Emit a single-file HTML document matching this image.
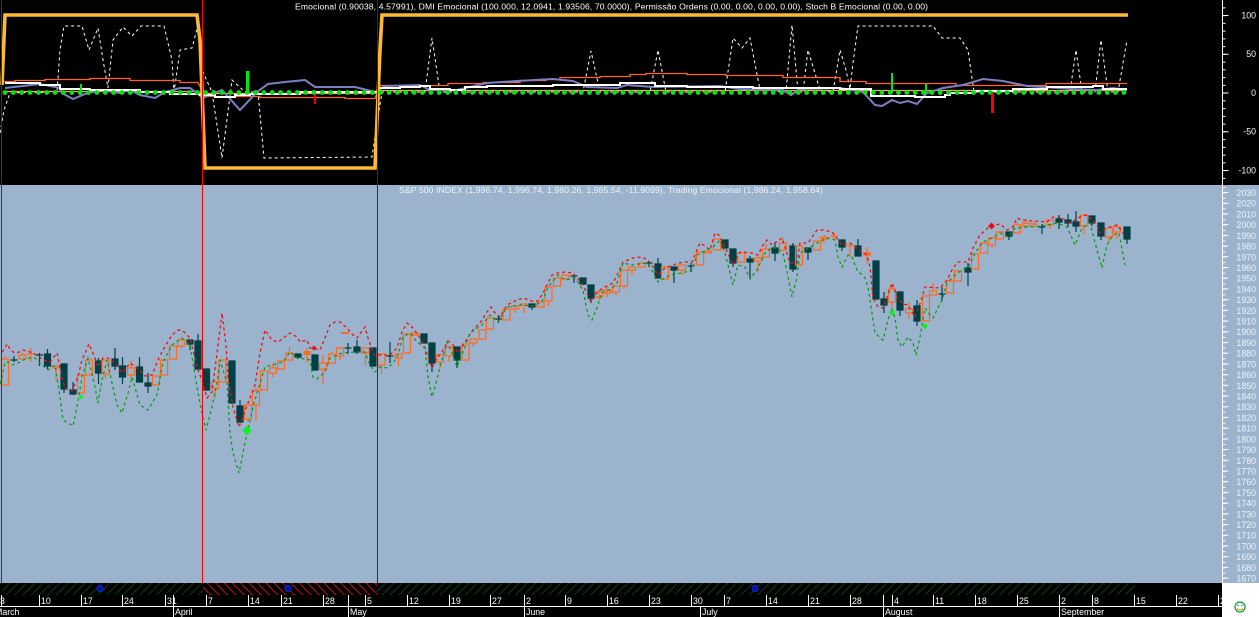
<!DOCTYPE html>
<html><head><meta charset="utf-8"><style>
html,body{margin:0;padding:0;background:#fff;overflow:hidden}
svg{display:block;font-family:"Liberation Sans",sans-serif}
</style></head><body>
<svg width="1259" height="617" viewBox="0 0 1259 617" xmlns="http://www.w3.org/2000/svg">
<defs>
<pattern id="hg" patternUnits="userSpaceOnUse" width="8.35" height="8.35"><path d="M0 8.35L8.35 0" stroke="#0a5f12" stroke-width=".7"/></pattern>
<pattern id="hr" patternUnits="userSpaceOnUse" width="8.35" height="8.35"><path d="M0 0L8.35 8.35" stroke="#ee1010" stroke-width=".9"/></pattern>
</defs>
<rect width="1259" height="617" fill="#fff"/>
<rect width="1259" height="185" fill="#000"/>
<rect y="185" width="1222" height="398" fill="#9bb3cc"/>
<rect x="1223" y="185" width="36" height="398" fill="#9bb3cc"/>
<rect y="583" width="1222" height="34" fill="#000"/>

<!-- upper panel -->
<g fill="none">
<path d="M0 133L4 110 10 93 57 92 60 50 64 26 82 26 89 50 98 28 103 60 108 88 113 40 123 27 132 36 141 26 164 26 172 60 174 92 180 50 192 48 198 25 202 70 212 92 222 158 232 80 245 92 258 92 264 158 372 157 376 130 382 92 425 92 432 38 440 92 583 92 591 51 600 92 650 92 658 50 666 92 725 92 733 38 742 48 750 38 760 90 786 92 792 25 798 92 803 92 808 50 820 90 833 92 840 50 843 60 846 70 850 89 853 63 858 26 933 26 942 38 960 38 968 50 974 92 1070 92 1076 50 1082 92 1095 92 1101 40 1108 92 1118 92 1127 40" stroke="#fff" stroke-width="1" stroke-dasharray="3 3"/>
<path transform="translate(0 .5)" d="M4 81H15V80H45V79H90V78H130V80H180V82H198L205 96H260V97H345V98H375L380 85H448V83H483V82H520V80H546V79H560V77H600V76H630V74H646V73H687V74H726V75H783V77H840V81H866V83H956V85H1046V83H1066V83H1127" stroke="#ff6428" stroke-width="1.3"/>
<path transform="translate(0 .5)" d="M3 91H198L206 93H375L380 90H1127" stroke="#ffa85a" stroke-width="1.2"/>
<path d="M5 88L40 84 60 88 62 93 73 99 85 94 100 90 120 93 130 90 140 95 155 98 165 92 180 88 190 88 203 98 222 90 240 110 257 92 268 84 285 82 305 80 315 87 355 87 375 92 385 86 420 85 430 90 457 90 487 83 517 81 553 79 573 81 587 87 617 88 627 85 653 87 720 86 740 89 783 90 791 95 800 89 840 88 863 92 875 105 882 106 892 100 900 103 908 101 917 104 927 93 943 88 963 85 983 79 1003 81 1027 86 1073 89 1097 90 1113 88 1127 90" stroke="#7d80c2" stroke-width="2"/>
<path d="M5 83H40V85H60V89H90V90H140V92H170V94H200V95H215V97H235V95H250V94H300V92H378V88H400V87H420V86H430V89H450V90H465V87H487V86H553V85H620V83H655V86H687V87H753V88H840V89H871V96H915V97H945V95H950V93H973V91H1013V89H1047V87H1093V86H1103V89H1127" stroke="#fff" stroke-width="2"/>
<path d="M2 85L5 15H197L200 40 202 90 205 168H375L377 120 380 50 382 15H1128" stroke="#fdb933" stroke-width="3.6"/>
<line x1="5" y1="92.500" x2="1127" y2="92.500" stroke="#0be017" stroke-width="4.800" stroke-linecap="round" stroke-dasharray="0 8.35"/>
</g>
<g fill="#0be017">
<rect x="80" y="84" width="2" height="9"/><rect x="246" y="71" width="3.5" height="22"/>
<rect x="891" y="73" width="2" height="20"/><rect x="925" y="84" width="2" height="9"/>
</g>
<g fill="#f00"><rect x="314" y="95" width="2" height="9"/><rect x="991" y="93" width="3" height="20"/></g>

<!-- titles -->
<text x="295" y="9.500" font-size="8.6" fill="#fff" textLength="633" lengthAdjust="spacing">Emocional (0.90038, 4.57991), DMI Emocional (100.000, 12.0941, 1.93506, 70.0000), Permissão Ordens (0.00, 0.00, 0.00, 0.00), Stoch B Emocional (0.00, 0.00)</text>
<text x="399" y="193" font-size="8.6" fill="#eef3f8" textLength="424" lengthAdjust="spacing">S&amp;P 500 INDEX (1,996.74, 1,996.74, 1,980.26, 1,985.54, -11.9099), Trading Emocional (1,986.24, 1,958.64)</text>

<!-- dark candles -->
<path fill="#003f45" stroke="#003f45" stroke-width="1.2" d="M10.5 360h7M14 356V362M36 355h7M39.5 353V366M44.5 354h6v12h-6zM47.5 349V369M61 364h6v25h-6zM64 364V393M70 390h6v4h-6zM73 382V395M95.5 361h6v12h-6zM98.5 358V384M112 359h6v7h-6zM115 348V370M119.5 366h6v11h-6zM122.5 357V384M136.5 367h6v15h-6zM139.5 357V382M145 383h6v3h-6zM148 373V393M187 340h6v4h-6zM190 340V350M195 341h6v28h-6zM198 334V369M203.5 369h6v21h-6zM229 361h6v42h-6zM237 406h6v16h-6zM240 400V422M295 354h6v3h-6zM298 354V359M312 355h6v15h-6zM344.5 348h7M348 343V354M354 347h6v5h-6zM357 340V354M370 348h6v18h-6zM386.5 356h7M390 342V363M421 334h6v9h-6zM429 343h6v20h-6zM432 343V372M454 347h6v13h-6zM457 347V368M495 319h7M498.5 315V323M529 304h6v3h-6zM532 304V310M570.5 276h7M574 275V283M580 278h6v6h-6zM588 285h6v13h-6zM591 285V303M645.5 263h7M649 261V267M655 264h6v14h-6zM658 258V278M671 267h6v3h-6zM674 267V283M687.5 266h7M691 263V272M722 240h6v8h-6zM730 249h6v14h-6zM733 249V267M747 259h6v3h-6zM750 256V279M772 248h6v5h-6zM775 242V261M790 246h6v23h-6zM793 243V272M805 248h6v4h-6zM808 248V260M839 240h6v7h-6zM842 240V251M855 246h6v10h-6zM858 239V256M873 261h6v38h-6zM881 299h6v6h-6zM884 292V313M897 292h6v18h-6zM900 292V316M914 306h6v15h-6zM917 300V326M938.5 294h7M942 287V301M965 268h6v4h-6zM968 263V286M1006 232h6v4h-6zM1009 232V240M1038.5 227h7M1042 224V234M1056 219h6v3h-6zM1059 215V229M1065 220h6v3h-6zM1068 214V227M1073 222h6v4h-6zM1076 211V232M1089 216h6v7h-6zM1092 216V226M1098 223h6v13h-6zM1101 223V240M1124 227h6v12h-6zM1127 227V244"/>

<!-- orange candles -->
<path fill="none" stroke="#ff6a1e" stroke-width="1.25" d="M1.500 359h7v26h-7zM5 356V359M19 355h7v4h-7zM22.500 353V355M27 354h8M31 348V362M52.500 366h7v2h-7zM56 368V380M77.500 375h7v18h-7zM85.500 360h7v15h-7zM89 359V360M102 360h7v14h-7zM105.500 374V379M127.500 368h7v7h-7zM131 361V368M131 375V379M152.500 376h7v9h-7zM160.500 360h7v15h-7zM164 359V360M169.500 346h7v13h-7zM177.500 340h7v6h-7zM181 338V340M181 346V348M211.500 382h7v7h-7zM215 380V382M215 389V398M219 360h7v22h-7zM244.500 405h7v14h-7zM248 419V422M252.500 391h7v14h-7zM256 388V391M256 405V421M260.500 371h7v19h-7zM269.500 368h7v5h-7zM273 363V368M273 373V377M277.500 361h7v8h-7zM286 353h7v7h-7zM289.500 347V353M319.500 363h7v6h-7zM323 355V363M323 369V384M328.500 354h7v9h-7zM332 352V354M336.500 348h7v8h-7zM340 347V348M340 356V360M362 348h7v5h-7zM365.500 353V366M378 354h7v11h-7zM381.500 365V374M395 354h7v4h-7zM398.500 358V366M403.500 334h7v19h-7zM411.500 333h7v2h-7zM436.500 355h7v7h-7zM440 362V368M445.500 347h7v9h-7zM449 356V362M462 344h7v16h-7zM470 339h7v4h-7zM473.500 343V347M479 330h7v9h-7zM486.500 318h7v11h-7zM503 309h7v11h-7zM511.500 306h7v3h-7zM515 309V313M520 304h8M524 304V313M537 302h7v5h-7zM545 287h7v14h-7zM548.500 301V306M553.500 278h7v8h-7zM562 275h7v4h-7zM595.500 292h7v5h-7zM599 290V300M603.500 290h7v3h-7zM607 286V297M612.500 286h7v6h-7zM616 292V295M620.500 270h7v16h-7zM624 286V289M628.500 267h7v3h-7zM632 270V275M638.500 263h7v4h-7zM661.500 267h7v12h-7zM678.500 265h7v5h-7zM682 270V275M696.500 252h7v13h-7zM704.500 251h7v2h-7zM708 248V251M713.500 239h7v11h-7zM737.500 253h7v9h-7zM754.500 258h7v3h-7zM758 255V258M758 261V272M762.500 249h7v8h-7zM766 244V249M779.500 243h7v7h-7zM783 238V243M795.500 246h7v19h-7zM813.500 241h7v9h-7zM820.500 237h7v2h-7zM824 235V243M830 236h8M834 233V240M846 246h8M850 243V257M863.500 253h7v2h-7zM867 247V263M888.500 289h7v13h-7zM892 285V289M892 302V308M905.500 309h7v4h-7zM909 302V309M909 313V319M922.500 296h7v25h-7zM929.500 291h7v4h-7zM933 283V291M946.500 281h7v12h-7zM950 279V281M954.500 271h7v10h-7zM971.500 254h7v15h-7zM980.500 243h7v10h-7zM988.500 238h7v7h-7zM992 245V248M996.500 232h7v7h-7zM1013.500 225h7v8h-7zM1017 222V225M1022.500 223h7v3h-7zM1026 219V223M1030 224h8M1034 221V228M1046.500 220h7v5h-7zM1050 225V229M1080.500 215h7v11h-7zM1084 214V215M1084 226V234M1105.500 228h7v9h-7zM1109 237V242M1113.500 227h7v5h-7zM1117 224V227M1117 232V239"/>
<path fill="#ff6a1e" d="M303.500 351h7v4h-7zM863.500 253h7v2h-7zM341 332h8v2h-8z"/>
<path stroke="#ff6a1e" stroke-width="1.25" d="M307 348V363"/>

<!-- red band -->
<polyline fill="none" stroke="#f01010" stroke-width="1.3" stroke-dasharray="3 3" points="2,352 5,348 7,344 10,349 13,352 17,353 23,350 30,352 37,355 43,360 50,362 57,353 62,377 65,388 72,391 78,377 82,360 89,344 95,358 98,367 103,358 108,358 115,363 122,373 130,363 137,368 145,376 152,375 158,360 163,350 172,335 178,330 183,331 190,338 193,350 198,370 202,380 207,398 212,392 217,353 222,313 226,345 228,377 233,407 239,427 248,403 255,385 260,353 265,330 272,340 278,342 290,333 297,337 300,342 307,340 310,348 320,350 325,338 330,325 335,322 340,322 347,328 352,334 357,338 362,331 365,327 368,338 374,355 382,355 390,355 397,348 402,332 407,323 413,328 420,338 425,348 432,368 437,358 442,352 448,341 453,345 458,353 465,342 473,330 480,323 487,312 491,307 495,313 500,317 507,305 517,300 524,298 530,301 538,301 543,293 548,283 552,275 558,273 565,272 573,273 583,285 591,302 597,292 603,288 613,283 618,273 623,262 633,258 642,257 648,260 653,267 658,275 665,268 673,265 683,262 692,262 697,250 700,243 705,246 710,250 715,233 719,235 725,247 733,265 740,252 752,253 758,255 763,245 767,240 772,245 782,238 790,263 797,263 800,243 808,243 817,230 823,230 832,232 842,245 850,243 858,249 867,255 870,267 873,298 878,307 883,308 888,295 892,283 897,297 903,304 908,305 915,317 922,298 925,287 940,288 947,280 953,268 958,262 968,262 973,248 980,235 990,226 1000,224 1007,230 1013,227 1017,218 1022,220 1033,221 1047,222 1053,217 1062,218 1070,223 1080,217 1087,215 1097,225 1100,233 1107,228 1117,225 1123,233 1125,237"/>
<!-- green band -->
<polyline fill="none" stroke="#079a12" stroke-width="1.2" stroke-dasharray="3 3" points="0,384 2,377 5,362 8,362 13,365 20,362 27,358 35,358 42,365 48,370 55,365 60,397 63,420 73,426 77,407 82,377 88,358 95,387 98,403 102,380 107,360 112,383 117,405 122,413 128,393 132,377 140,405 148,410 157,395 163,362 172,345 182,338 190,345 197,387 202,413 206,430 212,407 217,383 220,360 227,383 230,433 233,453 239,473 245,443 253,407 258,390 265,367 272,365 283,362 290,352 297,358 300,358 310,360 313,377 317,379 325,372 330,358 342,353 355,352 365,352 370,365 375,372 380,367 388,368 397,358 403,337 410,333 417,342 425,348 428,377 432,397 435,387 440,367 447,342 452,353 457,367 463,352 470,333 482,325 490,315 498,322 507,307 520,305 533,306 542,302 548,287 558,275 565,280 575,278 583,290 588,315 592,320 597,308 602,292 610,290 617,283 623,263 632,265 647,263 653,272 658,282 670,275 682,273 692,270 697,255 703,252 713,247 720,240 725,253 730,273 733,285 738,265 745,267 750,279 757,270 765,253 773,247 783,253 788,277 792,297 797,277 800,253 817,243 827,238 835,240 838,257 842,267 848,255 852,257 857,270 865,278 868,287 872,313 875,333 883,340 888,320 892,308 895,318 898,340 902,347 908,337 913,343 916,355 920,337 925,308 930,315 933,318 942,300 947,283 955,275 962,270 968,268 975,253 983,242 992,238 1000,233 1008,237 1015,228 1027,227 1042,226 1057,223 1067,227 1075,245 1082,228 1090,223 1097,250 1102,268 1107,245 1113,235 1119,233 1125,265"/>
<!-- markers -->
<path fill="#10f020" d="M81 394.500l2.500 2.500-2.500 2.500-2.500-2.500zM247 425.500l4.500 5-4.500 5-4.500-5zM892 310l3 3-3 3-3-3zM925 323l3 3-3 3-3-3z"/>
<path fill="#e81010" d="M314 345.500l2.500 2.500-2.500 2.500-2.500-2.500zM991.500 222.500l3.500 3.500-3.500 3.500-3.500-3.500z"/>

<!-- vertical lines -->
<g shape-rendering="crispEdges">
<rect x="1" y="0" width="1" height="583" fill="#0a5a12"/>
<rect x="202" y="0" width="1" height="583" fill="#f00"/>
<rect x="377" y="0" width="1" height="583" fill="#0a4a18"/>
</g>

<!-- hatch strip -->
<rect x="2" y="583" width="201" height="12" fill="url(#hg)"/>
<rect x="203" y="583" width="174" height="12" fill="url(#hr)"/>
<rect x="377" y="583" width="758" height="12" fill="url(#hg)"/>
<g fill="#001a80" stroke="#0a20e8" stroke-width="1.2"><circle cx="100" cy="588.500" r="3"/><circle cx="288" cy="588.500" r="3"/><circle cx="755" cy="588.500" r="3"/></g>

<!-- date axis -->
<path stroke="#fff" stroke-width="1" fill="none" d="M0 606.500H1222M1.500 595V606M39.500 595V606M81.500 595V606M122.500 595V606M165.500 595V606M206.500 595V606M248.500 595V606M281.500 595V606M323.500 595V606M365.500 595V606M407.500 595V606M449.500 595V606M490.500 595V606M524.500 595V606M565.500 595V606M607.500 595V606M649.500 595V606M691.500 595V606M724.500 595V606M766.500 595V606M808.500 595V606M850.500 595V606M892.500 595V606M933.500 595V606M975.500 595V606M1017.500 595V606M1059.500 595V606M1092.500 595V606M1134.500 595V606M1176.500 595V606M1218.500 595V606M173.500 595V617M348.500 595V617M524.500 606V617M700.500 606V617M883.500 595V617M1059.500 606V617"/>
<g font-size="8.8" fill="#fff">
<text x="0" y="604">3</text><text x="41" y="604">10</text><text x="83" y="604">17</text><text x="124" y="604">24</text><text x="167" y="604">31</text><text x="208" y="604">7</text><text x="250" y="604">14</text><text x="283" y="604">21</text><text x="325" y="604">28</text><text x="367" y="604">5</text><text x="409" y="604">12</text><text x="451" y="604">19</text><text x="492" y="604">27</text><text x="526" y="604">2</text><text x="567" y="604">9</text><text x="609" y="604">16</text><text x="651" y="604">23</text><text x="693" y="604">30</text><text x="726" y="604">7</text><text x="768" y="604">14</text><text x="810" y="604">21</text><text x="852" y="604">28</text><text x="894" y="604">4</text><text x="935" y="604">11</text><text x="977" y="604">18</text><text x="1019" y="604">25</text><text x="1061" y="604">2</text><text x="1094" y="604">8</text><text x="1136" y="604">15</text><text x="1178" y="604">22</text><text x="1220" y="604">2</text>
<text x="-5" y="615">March</text><text x="175" y="615">April</text><text x="350" y="615">May</text><text x="526" y="615">June</text><text x="702" y="615">July</text><text x="885" y="615">August</text><text x="1061" y="615">September</text>
</g>
<rect x="1222" y="583" width="37" height="34" fill="#fff"/>

<!-- right axis -->
<line x1="1222.500" y1="0" x2="1222.500" y2="583" stroke="#fff" stroke-width="1"/>
<line x1="1224" y1="7.400" x2="1224" y2="180" stroke="#fff" stroke-width="3" stroke-dasharray="1 6.750"/>
<line x1="1225.500" y1="15" x2="1225.500" y2="172" stroke="#fff" stroke-width="6" stroke-dasharray="1 37.750"/>
<line x1="1224" y1="187" x2="1224" y2="583" stroke="#fff" stroke-width="3" stroke-dasharray="1 4.355"/>
<line x1="1225.500" y1="192" x2="1225.500" y2="583" stroke="#fff" stroke-width="6" stroke-dasharray="1 9.710"/>
<g font-size="8.800" fill="#f2f2f2" text-anchor="end">
<text x="1256" y="18.500">100</text><text x="1256" y="57">50</text><text x="1256" y="96">0</text><text x="1256" y="134.500">-50</text><text x="1256" y="173.500">-100</text>
</g>
<g font-size="8.800" fill="#f0f4fa" text-anchor="end">
<text x="1256" y="196">2030</text><text x="1256" y="206.700">2020</text><text x="1256" y="217.400">2010</text><text x="1256" y="228.100">2000</text><text x="1256" y="238.800">1990</text><text x="1256" y="249.500">1980</text><text x="1256" y="260.300">1970</text><text x="1256" y="271">1960</text><text x="1256" y="281.700">1950</text><text x="1256" y="292.400">1940</text><text x="1256" y="303.100">1930</text><text x="1256" y="313.800">1920</text><text x="1256" y="324.500">1910</text><text x="1256" y="335.200">1900</text><text x="1256" y="345.900">1890</text><text x="1256" y="356.700">1880</text><text x="1256" y="367.400">1870</text><text x="1256" y="378.100">1860</text><text x="1256" y="388.800">1850</text><text x="1256" y="399.500">1840</text><text x="1256" y="410.200">1830</text><text x="1256" y="420.900">1820</text><text x="1256" y="431.600">1810</text><text x="1256" y="442.300">1800</text><text x="1256" y="453">1790</text><text x="1256" y="463.800">1780</text><text x="1256" y="474.500">1770</text><text x="1256" y="485.200">1760</text><text x="1256" y="495.900">1750</text><text x="1256" y="506.600">1740</text><text x="1256" y="517.300">1730</text><text x="1256" y="528">1720</text><text x="1256" y="538.700">1710</text><text x="1256" y="549.400">1700</text><text x="1256" y="560.100">1690</text><text x="1256" y="570.900">1680</text><text x="1256" y="581.500">1670</text>
</g>
<!-- smiley -->
<circle cx="1240" cy="607" r="5" fill="#fff" stroke="#0c9c28" stroke-width="1.200"/>
<circle cx="1238" cy="605.500" r=".7" fill="#0a60b0"/><circle cx="1242" cy="605.500" r=".7" fill="#0a60b0"/>
<path d="M1237 608.500q3 3 6 0" fill="none" stroke="#d08a10" stroke-width="1"/>
</svg>
</body></html>
